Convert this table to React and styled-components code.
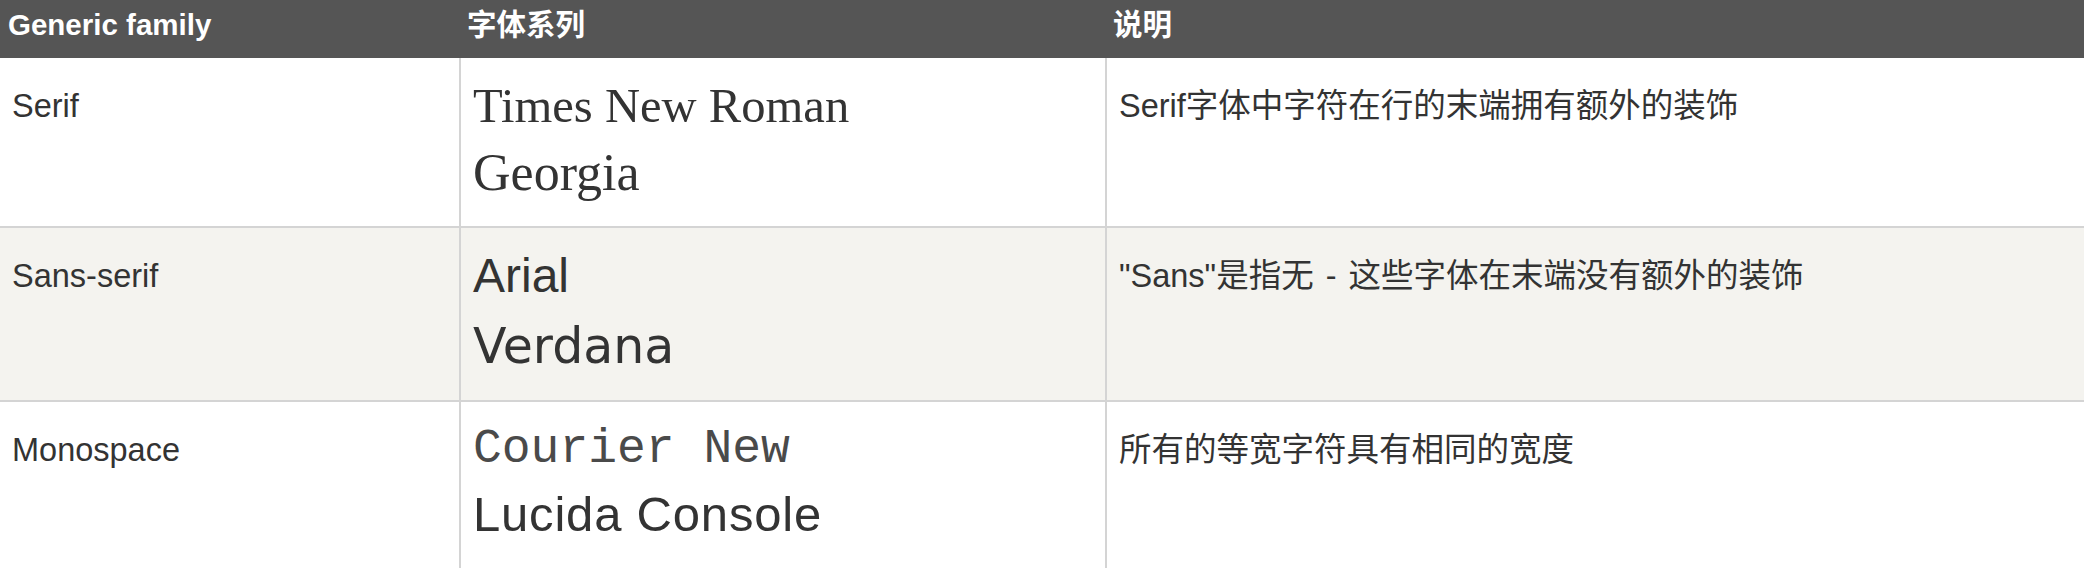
import React from "react";
import styled, { createGlobalStyle } from "styled-components";

const Global = createGlobalStyle`
  html, body { margin: 0; padding: 0; background: #fff; overflow: hidden; }
  *, *::before, *::after { box-sizing: border-box; }
`;

const COLS = "459px 646px 1fr";
const LINE = "#d4d4d4";

const Table = styled.div`
  width: 2084px;
  font-family: "Liberation Sans", "Noto Sans CJK SC", sans-serif;
  color: #333;
`;

const HeadRow = styled.div`
  display: grid;
  grid-template-columns: ${COLS};
  height: 58px;
  background: #555555;
`;

const HeadCell = styled.div`
  padding: 7px 8px 15px;
  font-size: 29.5px;
  line-height: 36px;
  font-weight: bold;
  color: #ffffff;
  white-space: nowrap;
`;

const Row = styled.div`
  display: grid;
  grid-template-columns: ${COLS};
  height: ${(p) => p.$h}px;
  background: ${(p) => (p.$alt ? "#f4f3ef" : "#ffffff")};
  border-bottom: 2px solid ${LINE};
`;

const Cell = styled.div`
  padding: 15px 12px 0;
  border-left: 2px solid ${LINE};
  font-size: 32.5px;
  line-height: 67px;
  word-spacing: 3px;
  white-space: nowrap;
  &:first-child {
    border-left: 0;
  }
`;

const Sample = styled.div`
  font-family: ${(p) => p.$family};
  font-size: ${(p) => p.$size}px;
  line-height: ${(p) => p.$lh}px;
  letter-spacing: ${(p) => p.$ls || 0}px;
  word-spacing: 0;
  color: ${(p) => p.$color || "#333"};
  white-space: nowrap;
`;

const SERIF = '"Liberation Serif", "Times New Roman", serif';
const SANS = '"Liberation Sans", Arial, sans-serif';
const VERD = '"DejaVu Sans", Verdana, sans-serif';
const MONO = '"Liberation Mono", "Courier New", monospace';

const rows = [
  {
    h: 170,
    generic: "Serif",
    samples: [
      { text: "Times New Roman", family: SERIF, size: 48.6, lh: 66 },
      { text: "Georgia", family: SERIF, size: 52, lh: 68.5 },
    ],
    desc: "Serif字体中字符在行的末端拥有额外的装饰",
  },
  {
    h: 174,
    alt: true,
    generic: "Sans-serif",
    samples: [
      { text: "Arial", family: SANS, size: 48, lh: 65.6 },
      { text: "Verdana", family: VERD, size: 49, lh: 76 },
    ],
    desc: '"Sans"是指无 - 这些字体在末端没有额外的装饰',
  },
  {
    h: 170,
    generic: "Monospace",
    samples: [
      { text: "Courier New", family: MONO, size: 48, lh: 65, color: "#4a4a4a" },
      { text: "Lucida Console", family: SANS, size: 49, lh: 64.5, ls: 0.8 },
    ],
    desc: "所有的等宽字符具有相同的宽度",
  },
];

export default function App() {
  return (
    <>
      <Global />
      <Table>
        <HeadRow>
          <HeadCell>Generic family</HeadCell>
          <HeadCell>字体系列</HeadCell>
          <HeadCell>说明</HeadCell>
        </HeadRow>
        {rows.map((r) => (
          <Row key={r.generic} $h={r.h} $alt={r.alt}>
            <Cell>{r.generic}</Cell>
            <Cell>
              {r.samples.map((s) => (
                <Sample
                  key={s.text}
                  $family={s.family}
                  $size={s.size}
                  $lh={s.lh}
                  $ls={s.ls}
                  $color={s.color}
                >
                  {s.text}
                </Sample>
              ))}
            </Cell>
            <Cell>{r.desc}</Cell>
          </Row>
        ))}
      </Table>
    </>
  );
}
